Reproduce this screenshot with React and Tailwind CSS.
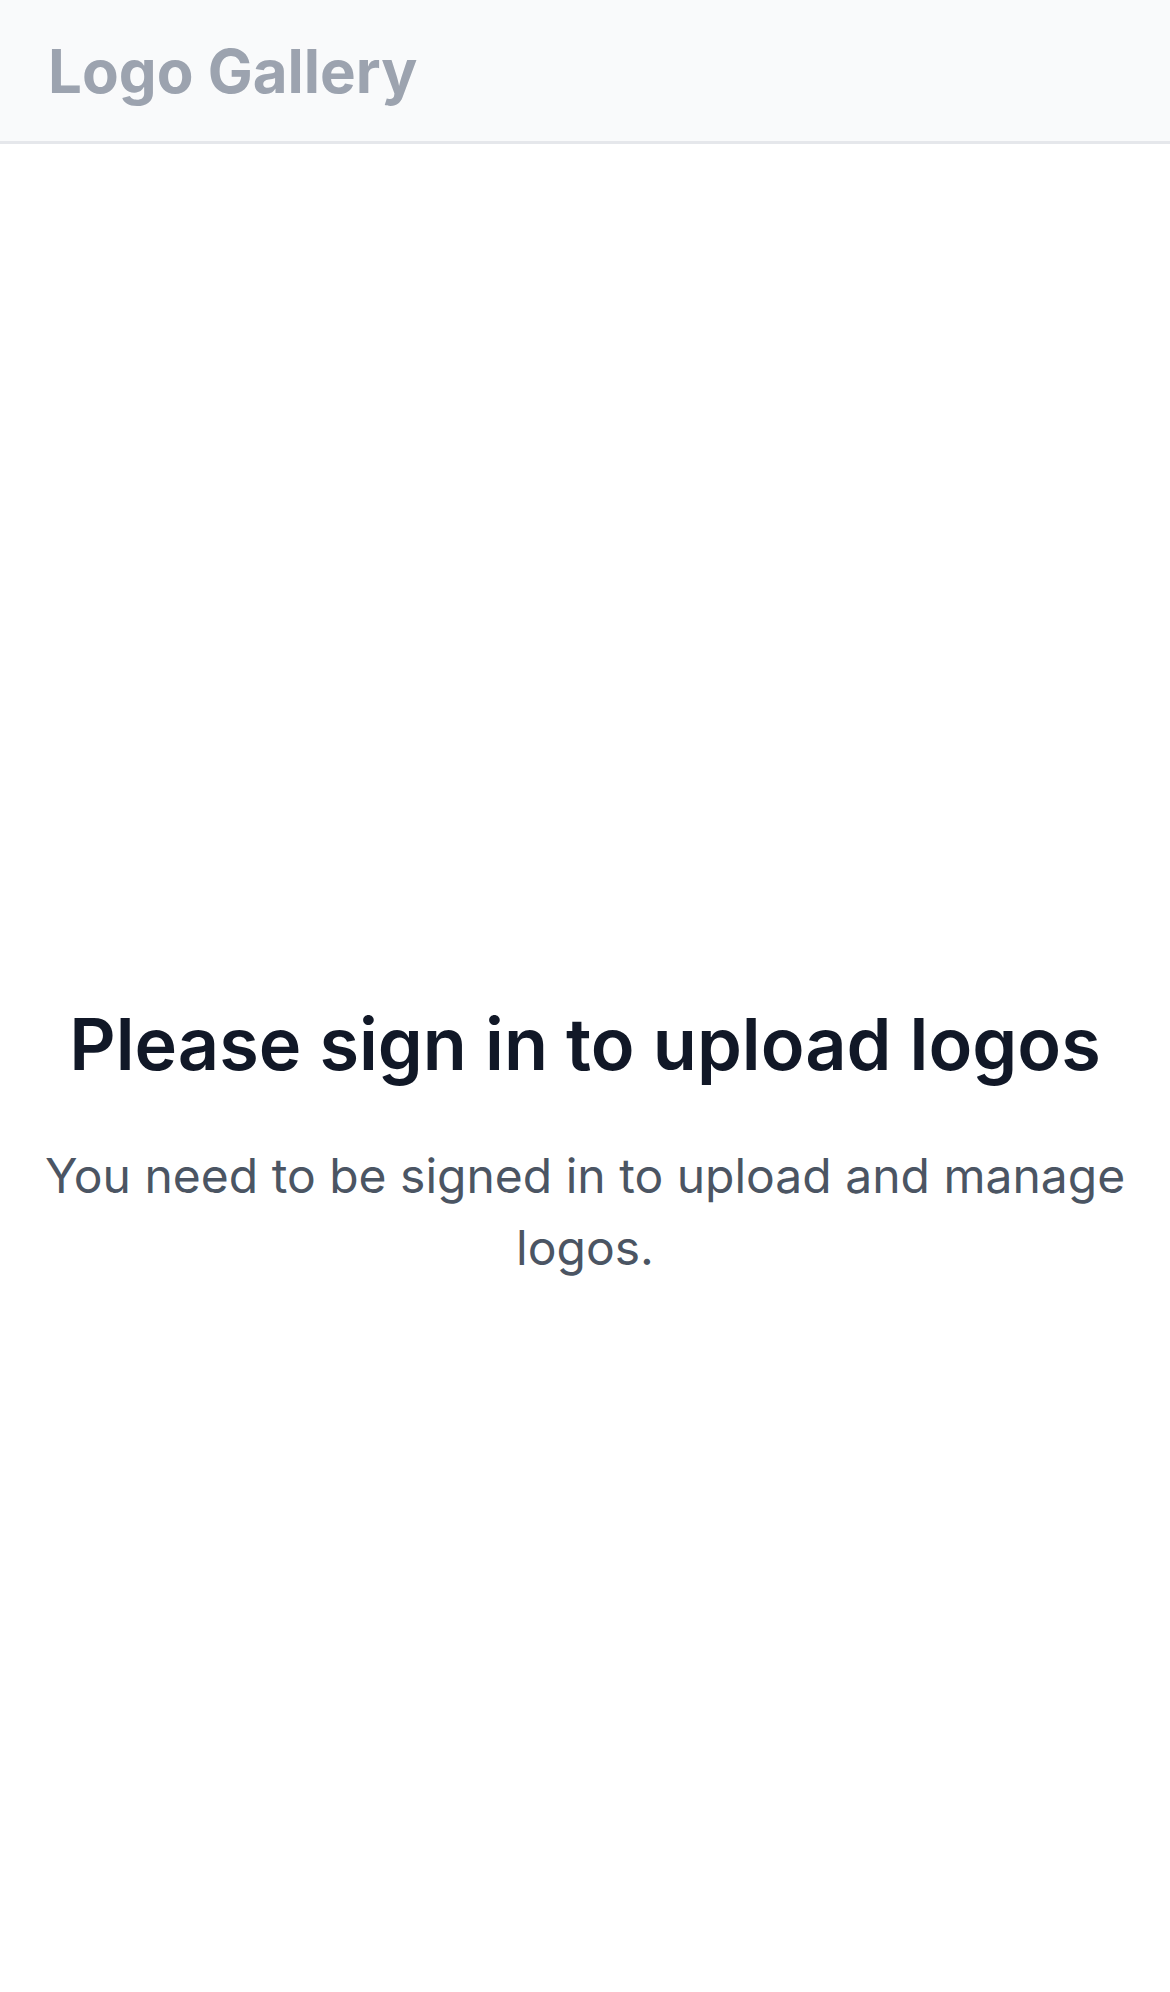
export default function App() {
  return (
    <div className="w-[1170px] bg-white" style={{ fontFamily: "Inter, 'Noto Sans', sans-serif" }}>
      <header className="h-[144px] flex items-center px-12 bg-[#f9fafb] border-b-[3px] border-[#e5e7eb]">
        <h1 className="text-[60px] leading-[84px] font-bold text-[#9ca3af]">Logo Gallery</h1>
      </header>
      <main className="h-[1992px] flex items-center justify-center px-6">
        <div className="text-center">
          <h2 className="text-[72px] leading-[96px] font-semibold text-[#111827] mb-12">Please sign in to upload logos</h2>
          <p className="text-[48px] leading-[72px] text-[#4b5563]">You need to be signed in to upload and manage logos.</p>
        </div>
      </main>
    </div>
  );
}
